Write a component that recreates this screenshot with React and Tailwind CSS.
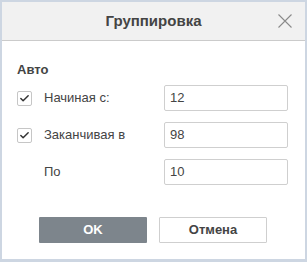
import { Check } from 'lucide-react';

// Small "Группировка" dialog: header, auto-numbering rows and two buttons.

const ROWS = [
  { label: 'Начиная с:', value: '12', checked: true },
  { label: 'Заканчивая в', value: '98', checked: true },
  { label: 'По', value: '10', checked: null },
];

export default function App() {
  return (
    <div
      className="flex h-[262px] w-[307px] bg-[#cdd6e2] pb-[3px] pl-[2px] pr-[2px] pt-[2px] text-[#444]"
      style={{ fontFamily: '"Liberation Sans", Arial, sans-serif' }}
    >
      <div className="flex flex-1 flex-col bg-white">
        <div className="relative flex h-[39px] shrink-0 items-center justify-center border-b border-[#cbcbcb] bg-[#f1f1f1]">
          <span className="text-[15px] font-bold text-[#444]">Группировка</span>
          <svg
            className="absolute right-[13px] top-[12px]"
            width="14"
            height="14"
            viewBox="0 0 14 14"
            fill="none"
            stroke="#8a8a8a"
            strokeWidth="1.1"
          >
            <path d="M0.5 0.5 L13.5 13.5 M13.5 0.5 L0.5 13.5" />
          </svg>
        </div>

        <div className="flex flex-col pl-[15px] pr-[17px] pt-[21px]">
          <div className="h-[16px] text-[13px] font-bold leading-[16px]">Авто</div>
          <div className="mt-[7px] flex flex-col gap-[11px]">
            {ROWS.map((r) => (
              <div key={r.label} className="flex h-[26px] items-center">
                <span className="flex w-[27px] shrink-0">
                  {r.checked !== null && (
                    <span className="flex h-[15px] w-[15px] items-center justify-center rounded-[2px] border border-[#c6c6c6]">
                      <Check size={11} strokeWidth={3.2} color="#333" />
                    </span>
                  )}
                </span>
                <span className="flex-1 text-[13px] leading-[16px]">{r.label}</span>
                <div className="flex h-[26px] w-[124px] items-center rounded-[2px] border border-[#cfcfcf] px-[5px] text-[13px]">
                  {r.value}
                </div>
              </div>
            ))}
          </div>
        </div>

        <div className="mt-[32px] flex justify-center gap-[12px] pr-[1px]">
          <button className="h-[26px] w-[108px] rounded-[1px] bg-[#7d858c] text-[13px] font-bold text-white">
            OK
          </button>
          <button className="h-[26px] w-[108px] rounded-[1px] border border-[#cfcfcf] bg-white text-[13px] font-bold text-[#444]">
            Отмена
          </button>
        </div>
      </div>
    </div>
  );
}
